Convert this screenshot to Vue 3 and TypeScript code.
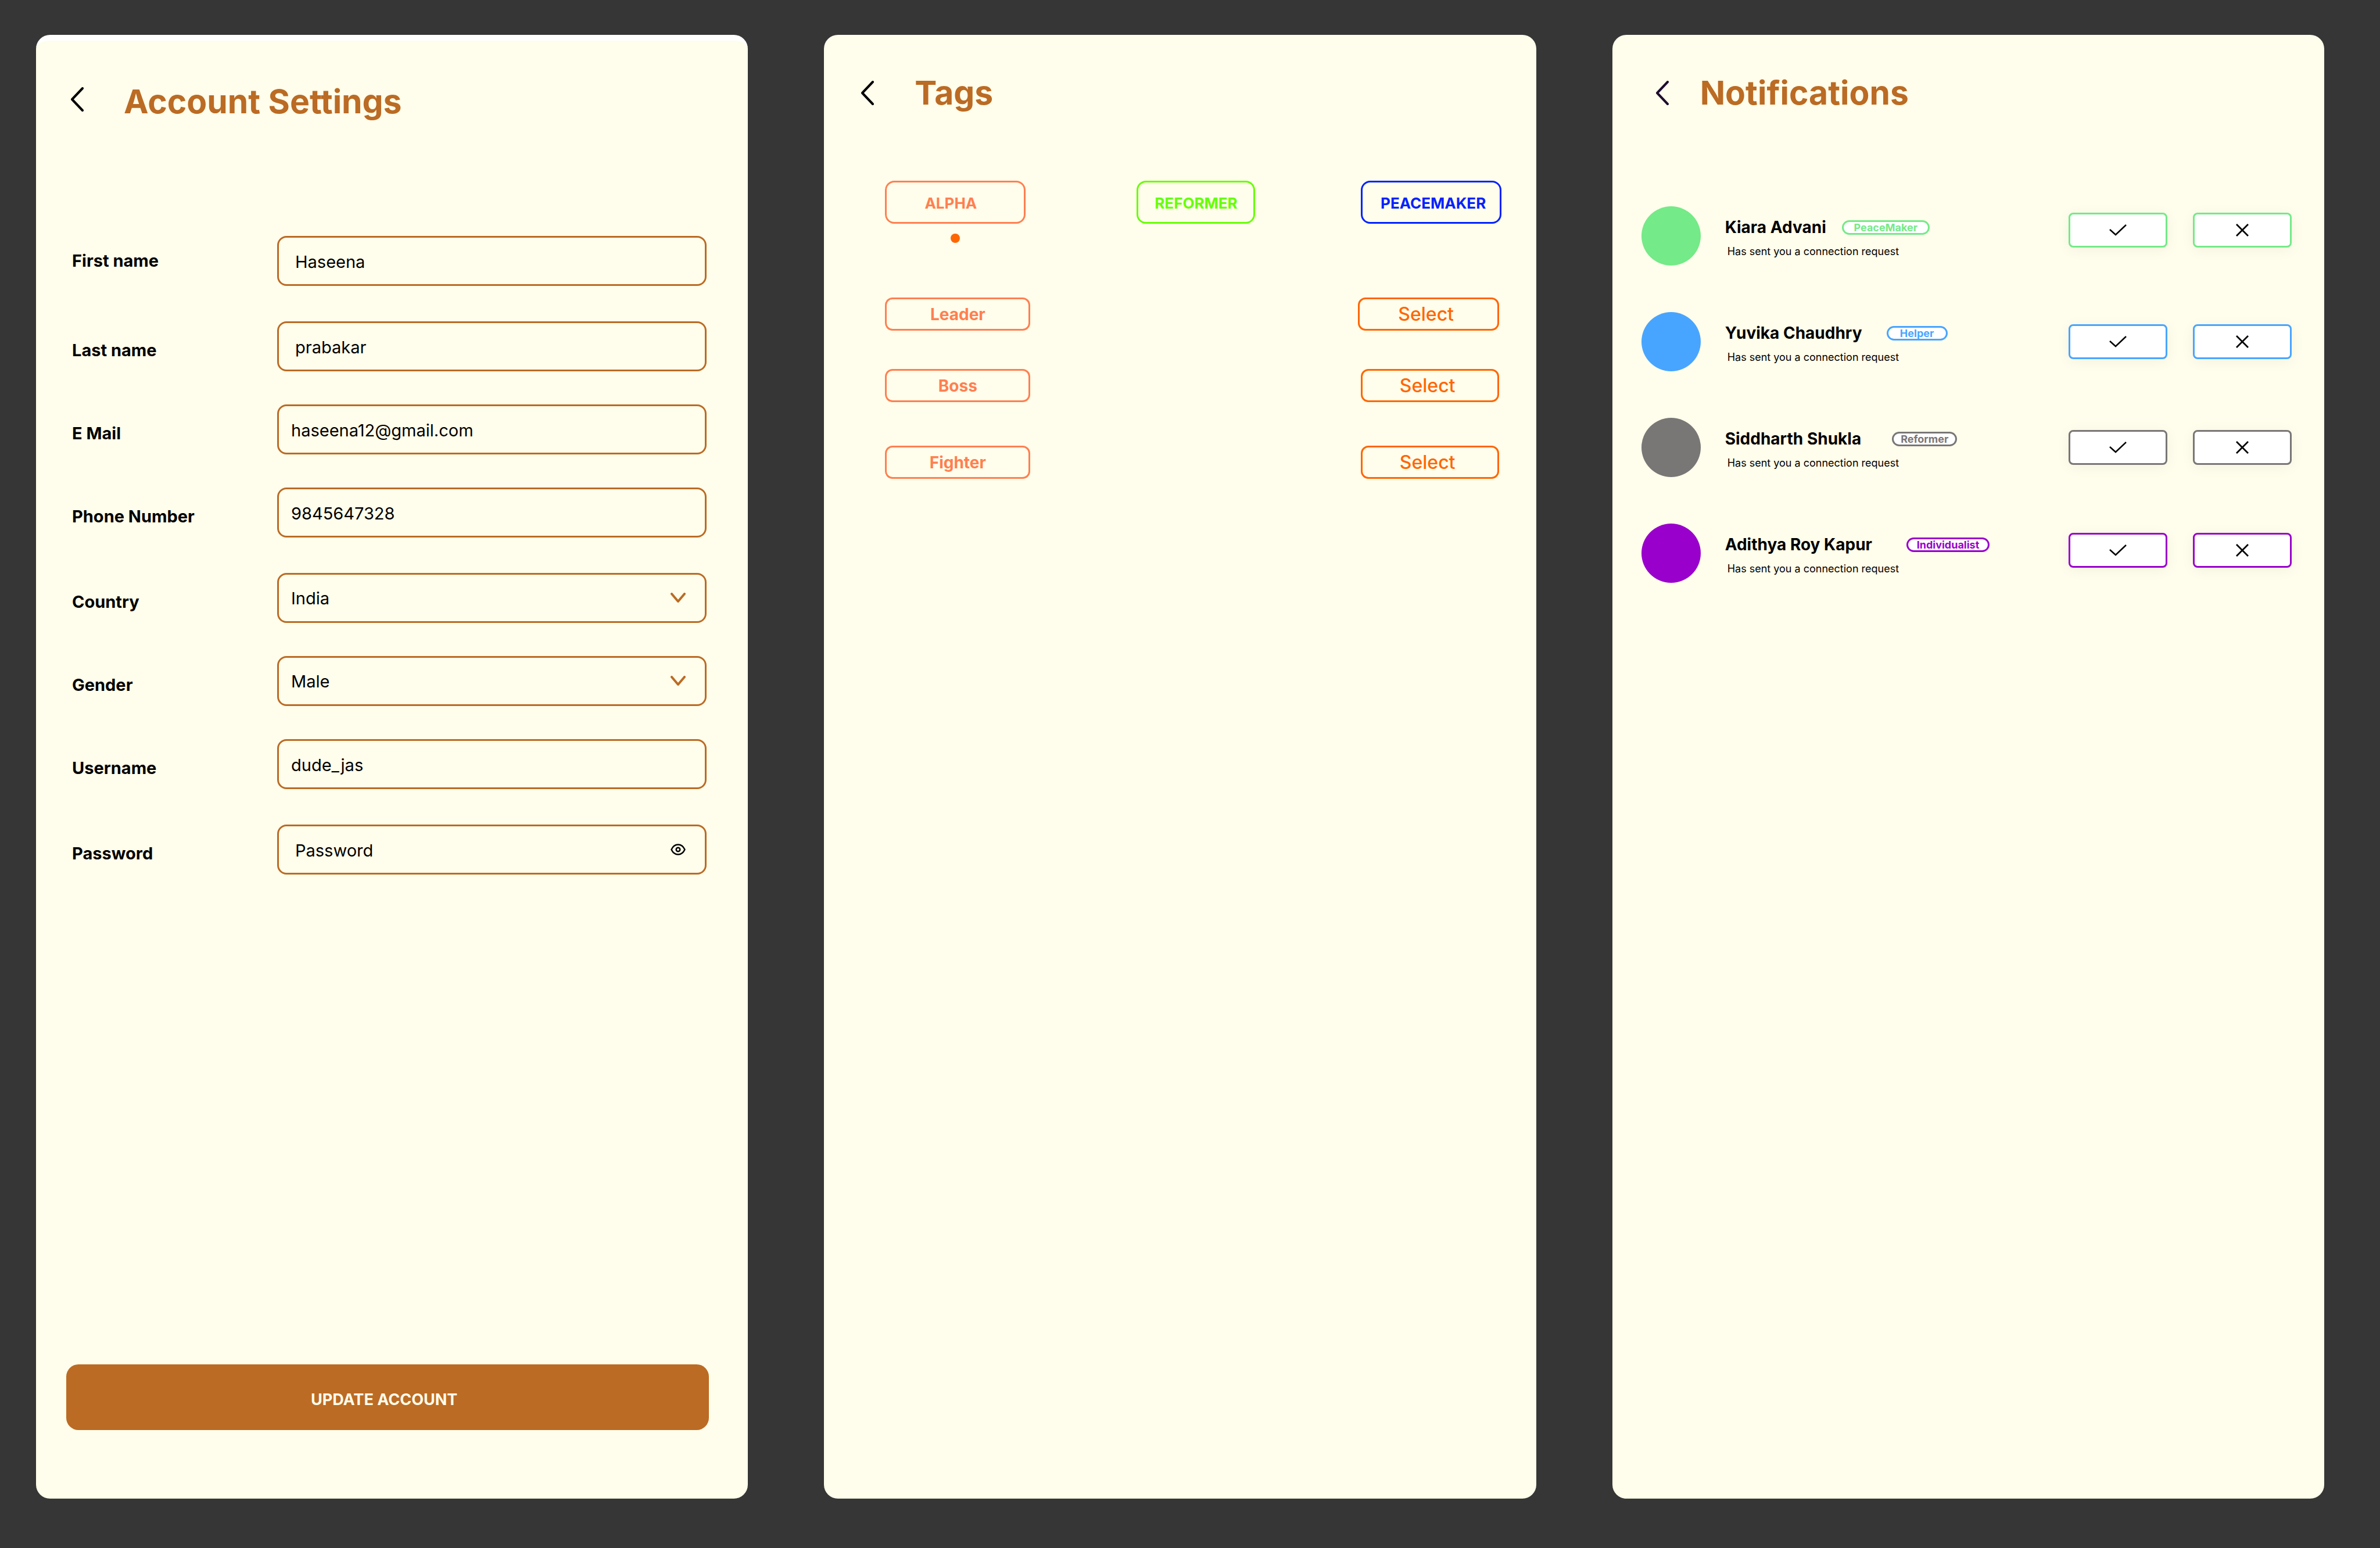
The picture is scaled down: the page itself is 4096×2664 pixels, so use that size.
<script setup lang="ts">
import { ref } from 'vue'

interface Field {
  id: string
  label: string
  kind: 'text' | 'email' | 'tel' | 'select' | 'password'
  value: string
  options?: string[]
  roomy?: boolean
  inset?: boolean
}

interface Tag {
  name: string
  tone: string
}

interface ConnectionRequest {
  name: string
  badge: string
  tone: string
}

const fields = ref<Field[]>([
  { id: 'first-name', label: 'First name', kind: 'text', value: 'Haseena', inset: true },
  { id: 'last-name', label: 'Last name', kind: 'text', value: 'prabakar', roomy: true, inset: true },
  { id: 'email', label: 'E Mail', kind: 'email', value: 'haseena12@gmail.com' },
  { id: 'phone', label: 'Phone Number', kind: 'tel', value: '9845647328' },
  { id: 'country', label: 'Country', kind: 'select', value: 'India', options: ['India'], roomy: true },
  { id: 'gender', label: 'Gender', kind: 'select', value: 'Male', options: ['Male', 'Female'] },
  { id: 'username', label: 'Username', kind: 'text', value: 'dude_jas' },
  { id: 'password', label: 'Password', kind: 'password', value: '', roomy: true, inset: true },
])

const tags: Tag[] = [
  { name: 'ALPHA', tone: 'coral' },
  { name: 'REFORMER', tone: 'lime' },
  { name: 'PEACEMAKER', tone: 'royal' },
]
const activeTag = ref('ALPHA')

const traits = ['Leader', 'Boss', 'Fighter']

const requests: ConnectionRequest[] = [
  { name: 'Kiara Advani', badge: 'PeaceMaker', tone: 'green' },
  { name: 'Yuvika Chaudhry', badge: 'Helper', tone: 'blue' },
  { name: 'Siddharth Shukla', badge: 'Reformer', tone: 'grey' },
  { name: 'Adithya Roy Kapur', badge: 'Individualist', tone: 'purple' },
]
</script>

<template>
  <main class="board">
    <section class="panel account">
      <header class="head">
        <button class="back" type="button" aria-label="Back">
          <svg viewBox="0 0 24 42" width="24" height="42"><path d="M20 2 2 21l18 19" /></svg>
        </button>
        <h1 class="title">Account Settings</h1>
      </header>
      <form class="form" @submit.prevent>
        <div v-for="field in fields" :key="field.id" class="field" :class="{ roomy: field.roomy }">
          <label class="label" :for="field.id">{{ field.label }}</label>
          <div class="control">
            <template v-if="field.kind === 'select'">
              <select :id="field.id" v-model="field.value" class="box">
                <option v-for="option in field.options" :key="option">{{ option }}</option>
              </select>
              <svg class="caret" viewBox="0 0 26 18" width="26" height="18"><path d="M2 2l11 13L24 2" /></svg>
            </template>
            <template v-else>
              <input
                :id="field.id"
                v-model="field.value"
                class="box"
                :class="{ inset: field.inset }"
                :type="field.kind"
                :placeholder="field.label"
              />
              <button v-if="field.kind === 'password'" class="peek" type="button" aria-label="Show password">
                <svg viewBox="0 0 26 20" width="26" height="20" stroke-width="2.5">
                  <path d="M1.5 10C4 4.500 8.500 1.500 13 1.500S22 4.500 24.500 10C22 15.500 17.500 18.500 13 18.500S4 15.500 1.500 10z" />
                  <circle cx="13" cy="10" r="3.3" />
                </svg>
              </button>
            </template>
          </div>
        </div>
        <button class="update" type="submit">UPDATE ACCOUNT</button>
      </form>
    </section>

    <section class="panel tags">
      <header class="head">
        <button class="back" type="button" aria-label="Back">
          <svg viewBox="0 0 24 42" width="24" height="42"><path d="M20 2 2 21l18 19" /></svg>
        </button>
        <h1 class="title">Tags</h1>
      </header>
      <ul class="tag-row">
        <li v-for="tag in tags" :key="tag.name" class="tag-cell" :class="tag.tone">
          <button class="tag" type="button" @click="activeTag = tag.name">{{ tag.name }}</button>
          <span v-if="activeTag === tag.name" class="dot"></span>
        </li>
      </ul>
      <ul class="traits">
        <li v-for="trait in traits" :key="trait" class="trait">
          <span class="trait-name">{{ trait }}</span>
          <button class="select" type="button">Select</button>
        </li>
      </ul>
    </section>

    <section class="panel notifications">
      <header class="head">
        <button class="back" type="button" aria-label="Back">
          <svg viewBox="0 0 24 42" width="24" height="42"><path d="M20 2 2 21l18 19" /></svg>
        </button>
        <h1 class="title">Notifications</h1>
      </header>
      <ul class="requests">
        <li v-for="request in requests" :key="request.name" class="request" :class="request.tone">
          <span class="avatar"></span>
          <div class="who">
            <div class="name-line">
              <h2 class="name">{{ request.name }}</h2>
              <span class="badge">{{ request.badge }}</span>
            </div>
            <p class="note">Has sent you a connection request</p>
          </div>
          <div class="actions">
            <button class="action" type="button" aria-label="Accept">
              <svg viewBox="0 0 30 20" width="30" height="20" stroke-width="2.5"><path d="M1 9l10 9L29 1" /></svg>
            </button>
            <button class="action" type="button" aria-label="Decline">
              <svg viewBox="0 0 22 22" width="22" height="22" stroke-width="2.8"><path d="M1 1l20 20M21 1L1 21" /></svg>
            </button>
          </div>
        </li>
      </ul>
    </section>
  </main>
</template>

<style>
body {
  margin: 0;
  background: #363636;
}
</style>

<style scoped>
.board {
  --brown: #bb6b24;
  --cream: #fffdeb;
  box-sizing: border-box;
  min-height: 100vh;
  padding: 60px 96px 85px 62px;
  display: grid;
  grid-template-columns: repeat(3, minmax(0, 1fr));
  gap: 131px;
  font-family: Inter, "Liberation Sans", sans-serif;
  color: #000;
}

.board *,
.board *::before {
  box-sizing: border-box;
}

button,
input,
select {
  margin: 0;
  padding: 0;
  font: inherit;
  color: inherit;
  background: none;
  border: 0;
}

ul {
  margin: 0;
  padding: 0;
  list-style: none;
}

svg {
  display: block;
  fill: none;
  stroke: currentColor;
  stroke-linecap: round;
  stroke-linejoin: round;
}

.panel {
  display: flex;
  flex-direction: column;
  background: var(--cream);
  border-radius: 24px;
  overflow: hidden;
}

.head {
  display: flex;
  align-items: center;
  padding: 67px 60px 0 64px;
  gap: 68px;
}

.back svg {
  stroke-width: 4;
}

.title {
  margin: 0;
  font-size: 57px;
  line-height: 66px;
  font-weight: 700;
  color: var(--brown);
}

/* Account settings */
.account {
  border-top: 10px solid #fff;
}

.account .head {
  padding: 72px 60px 0;
  gap: 67px;
}

.account .back {
  padding-bottom: 8px;
}

.form {
  flex: 1;
  display: flex;
  flex-direction: column;
  padding: 198px 67px 118px 52px;
}

.field {
  display: grid;
  grid-template-columns: 353px minmax(0, 1fr);
  align-items: center;
  padding: 0 4px 0 10px;
  margin-top: 57px;
}

.field.roomy {
  margin-top: 61px;
}

.field:first-child {
  margin-top: 0;
}

.label {
  padding-top: 14px;
  font-size: 29px;
  line-height: 34px;
  font-weight: 700;
}

.field:first-child .label {
  padding-top: 0;
}

.control {
  display: grid;
  align-items: center;
}

.control > * {
  grid-area: 1 / 1;
}

.box {
  width: 100%;
  height: 86px;
  padding: 2px 100px 0 21px;
  border: 3px solid var(--brown);
  border-radius: 16px;
  appearance: none;
  font-size: 29px;
  line-height: 34px;
}

.box.inset {
  padding-left: 28px;
}

.box::placeholder {
  color: #000;
  opacity: 1;
}

.caret,
.peek {
  justify-self: end;
  margin-right: 36px;
}

.caret {
  color: var(--brown);
  stroke-width: 4;
  pointer-events: none;
}

.update {
  height: 113px;
  margin-top: auto;
  padding: 8px 12px 0 0;
  border-radius: 21px;
  background: var(--brown);
  color: var(--cream);
  font-size: 27px;
  font-weight: 700;
}

/* Tags */
.coral {
  color: #ff7f50;
}

.lime {
  color: #66ff00;
}

.royal {
  color: #0022ff;
}

.tag-row {
  display: grid;
  grid-template-columns: 434fr 386fr 242fr;
  padding: 118px 60px 0 105px;
}

.tag-cell {
  width: 242px;
  display: flex;
  flex-direction: column;
  align-items: center;
  gap: 17px;
}

.tag-cell.lime {
  width: 204px;
}

.tag {
  width: 100%;
  height: 74px;
  padding-top: 2px;
  border: 3px solid currentColor;
  border-radius: 16px;
  font-size: 26px;
  font-weight: 700;
}

.coral .tag {
  padding-right: 16px;
}

.royal .tag {
  padding-left: 8px;
}

.dot {
  width: 16px;
  height: 16px;
  border-radius: 50%;
  background: #ff6600;
}

.traits {
  padding: 94px 64px 0 105px;
}

.trait {
  display: flex;
  justify-content: space-between;
}

.trait + .trait {
  margin-top: 66px;
}

.trait:last-child {
  margin-top: 75px;
}

.trait-name,
.select {
  height: 57px;
  display: flex;
  align-items: center;
  justify-content: center;
  border: 3px solid currentColor;
  border-radius: 13px;
}

.trait-name {
  width: 250px;
  color: #ff7f50;
  font-size: 28px;
  font-weight: 700;
}

.select {
  width: 238px;
  padding-right: 8px;
  color: #ff6600;
  font-size: 32px;
  font-weight: 500;
}

.trait:first-child .select {
  width: 243px;
}

/* Notifications */
.notifications .head {
  padding-left: 75px;
  gap: 52px;
}

.notifications .back {
  color: #1e0c2f;
}

.green {
  --tone: #74ea88;
  --badge-gap: 27px;
  --badge-width: 151px;
}

.blue {
  --tone: #48a5ff;
  --badge-gap: 42px;
  --badge-width: 105px;
}

.grey {
  --tone: #797676;
  --badge-gap: 53px;
  --badge-width: 112px;
}

.purple {
  --tone: #9900cc;
  --badge-gap: 59px;
  --badge-width: 143px;
}

.requests {
  display: grid;
  gap: 80px;
  padding: 162px 56px 0 50px;
}

.request {
  display: flex;
  align-items: center;
}

.avatar {
  flex: none;
  width: 102px;
  height: 102px;
  border-radius: 50%;
  background: var(--tone);
}

.who {
  flex: 1;
  padding: 6px 0 0 42px;
}

.name-line {
  display: flex;
  align-items: center;
  gap: var(--badge-gap);
}

.name {
  margin: 0;
  font-size: 28px;
  line-height: 34px;
  font-weight: 700;
  white-space: nowrap;
}

.badge {
  width: var(--badge-width);
  height: 25px;
  display: flex;
  align-items: center;
  justify-content: center;
  border: 3px solid var(--tone);
  border-radius: 13px;
  background: #fff;
  color: var(--tone);
  font-size: 18px;
  line-height: 19px;
  font-weight: 700;
}

.note {
  margin: 14px 0 0;
  padding-left: 4px;
  font-size: 18px;
  line-height: 22px;
  white-space: nowrap;
}

.actions {
  display: flex;
  gap: 44px;
}

.request:first-child .actions {
  padding-bottom: 20px;
}

.request:last-child .actions {
  padding-bottom: 10px;
}

.action {
  width: 170px;
  height: 60px;
  display: grid;
  place-items: center;
  border: 3px solid var(--tone);
  border-radius: 8px;
  background: #fff;
  box-shadow: 0 4px 24px rgba(0, 0, 0, 0.05);
}

.action svg {
  stroke-linecap: butt;
  stroke-linejoin: miter;
  overflow: visible;
}
</style>
